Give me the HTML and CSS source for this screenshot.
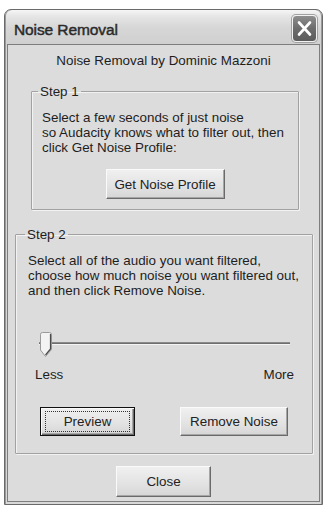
FILE: index.html
```html
<!DOCTYPE html>
<html>
<head>
<meta charset="utf-8">
<link rel="stylesheet" href="styles.css">
</head>
<body>
<div class="window">
  <div class="titlebar">
    <span class="title">Noise Removal</span>
    <span class="xbtn">
      <svg width="25" height="27" viewBox="0 0 25 27">
        <path d="M7 7.5 L18 19.5 M18 7.5 L7 19.5" stroke="#ffffff" stroke-width="2.6" stroke-linecap="round" fill="none"/>
      </svg>
    </span>
  </div>
  <div class="client">
    <div class="header">Noise Removal by Dominic Mazzoni</div>
    <fieldset class="group g1">
      <legend>Step 1</legend>
      <p class="desc">Select a few seconds of just noise<br>so Audacity knows what to filter out, then<br>click Get Noise Profile:</p>
      <div class="center"><button class="btn btn-profile">Get Noise Profile</button></div>
    </fieldset>
    <fieldset class="group g2">
      <legend>Step 2</legend>
      <p class="desc">Select all of the audio you want filtered,<br>choose how much noise you want filtered out,<br>and then click Remove Noise.</p>
      <div class="slider">
        <svg class="thumb" width="14" height="25" viewBox="0 0 14 25">
          <path d="M1.5 2.5 Q1.5 0.5 3.5 0.5 H10.5 Q12.5 0.5 12.5 2.5 V17.5 L6.5 24.5 L1.5 18 Z" fill="#f3f3f3" stroke="#9a9a9a"/>
          <path d="M11.5 2 V17 L6.5 23" fill="none" stroke="#4a4a4a" stroke-width="1.2"/>
        </svg>
      </div>
      <div class="labels"><span>Less</span><span>More</span></div>
      <div class="btnrow">
        <button class="btn default"><span class="focus">Preview</span></button>
        <button class="btn btn-remove">Remove Noise</button>
      </div>
    </fieldset>
    <div class="center"><button class="btn btn-close">Close</button></div>
  </div>
</div>
</body>
</html>
```

FILE: styles.css
```css
html, body {
  margin: 0;
  padding: 0;
  background: #ffffff;
}

body {
  font-family: "Liberation Sans", Arial, sans-serif;
  font-size: 13.4px;
  line-height: 15px;
  color: #1e1e1e;
}

.window {
  box-sizing: border-box;
  width: 319px;
  margin: 9px 0 0 4px;
  border: 1px solid #6a6a6a;
  border-radius: 7px 7px 0 0;
  background: linear-gradient(to bottom, #f6f6f6 0px, #e6e6e6 6px, #d6d6d6 18px, #d0d0d0 34px, #d8d8d8 40px, #d8d8d8 100%);
  box-shadow: inset 1px 0 0 #9a9a9a, inset -1px 0 0 #9a9a9a;
}

.titlebar {
  display: flex;
  justify-content: space-between;
  align-items: flex-start;
  height: 34px;
  padding: 0 5px 0 9px;
}

.title {
  margin-top: 11px;
  font-size: 15.5px;
  line-height: 18px;
  color: #2a2a2a;
  -webkit-text-stroke: 0.45px #2a2a2a;
  letter-spacing: -0.1px;
}

.xbtn {
  display: block;
  margin-top: 5px;
  width: 25px;
  height: 27px;
  box-sizing: border-box;
  border: 1px solid #f2f2f2;
  border-radius: 4px;
  background: linear-gradient(to bottom, #8e8e8e, #6c6c6c 50%, #5c5c5c);
  box-shadow: 0 0 0 1px #a0a0a0;
}

.xbtn svg {
  display: block;
  margin: -1px;
}

.client {
  margin: 0 2px 2px 2px;
  border: 1px solid #7e7e7e;
  background: #dcdcdc;
  padding-bottom: 4px;
}

.header {
  margin-top: 8px;
  text-align: center;
  white-space: nowrap;
}

.group {
  box-sizing: border-box;
  min-width: 0;
  border: 1px solid #a2a2a2;
  box-shadow: inset 1px 1px 0 #f2f2f2, 1px 1px 0 #f2f2f2;
  border-radius: 1px;
}

.group legend {
  padding: 0 2px;
  line-height: 15px;
  height: 15px;
}

.g1 {
  margin: 16px 0 0 23px;
  width: 268px;
  padding: 0 10px 10px 10px;
}

.g1 legend {
  margin-left: -4px;
}

.g2 {
  margin: 17px 0 0 7px;
  width: 298px;
  padding: 0 12px 17px 12px;
}

.g2 legend {
  margin-left: -3px;
}

.desc {
  margin: 11px 0 0 0;
  white-space: nowrap;
}

.center {
  display: flex;
  justify-content: center;
}

.btn {
  box-sizing: border-box;
  margin: 0;
  padding: 0;
  font-family: "Liberation Sans", Arial, sans-serif;
  font-size: 13.4px;
  line-height: 15px;
  color: #222222;
  background: linear-gradient(to bottom, #f0f0f0, #e2e2e2 60%, #d6d6d6);
  border: 1px solid;
  border-color: #fafafa #6a6a6a #6a6a6a #fafafa;
  box-shadow: inset -1px -1px 0 #a6a6a6;
  border-radius: 0;
}

.btn-profile {
  margin-top: 14px;
  width: 119px;
  height: 30px;
}

.slider {
  margin: 34px 10px 0 11px;
  height: 25px;
  display: flex;
  background: linear-gradient(to bottom,
    transparent 10px,
    #8a8a8a 10px, #8a8a8a 11px,
    #6e6e6e 11px, #6e6e6e 12px,
    #f4f4f4 12px, #f4f4f4 13px,
    transparent 13px);
}

.thumb {
  display: block;
}

.labels {
  margin-top: 10px;
  display: flex;
  justify-content: space-between;
  padding: 0 6px 0 7px;
}

.btnrow {
  margin-top: 25px;
  display: flex;
  justify-content: space-between;
  padding: 0 12px;
}

.btn.default {
  width: 95px;
  height: 29px;
  border: 1px solid #111111;
  box-shadow: inset 1px 1px 0 #fafafa, inset -1px -1px 0 #6a6a6a, inset -2px -2px 0 #a6a6a6;
}

.focus {
  display: block;
  box-sizing: border-box;
  margin: 0 4px;
  height: 21px;
  line-height: 19px;
  border: 1px dotted #333333;
}

.btn-remove {
  width: 108px;
  height: 29px;
}

.btn-close {
  margin-top: 12px;
  width: 95px;
  height: 31px;
}
```
